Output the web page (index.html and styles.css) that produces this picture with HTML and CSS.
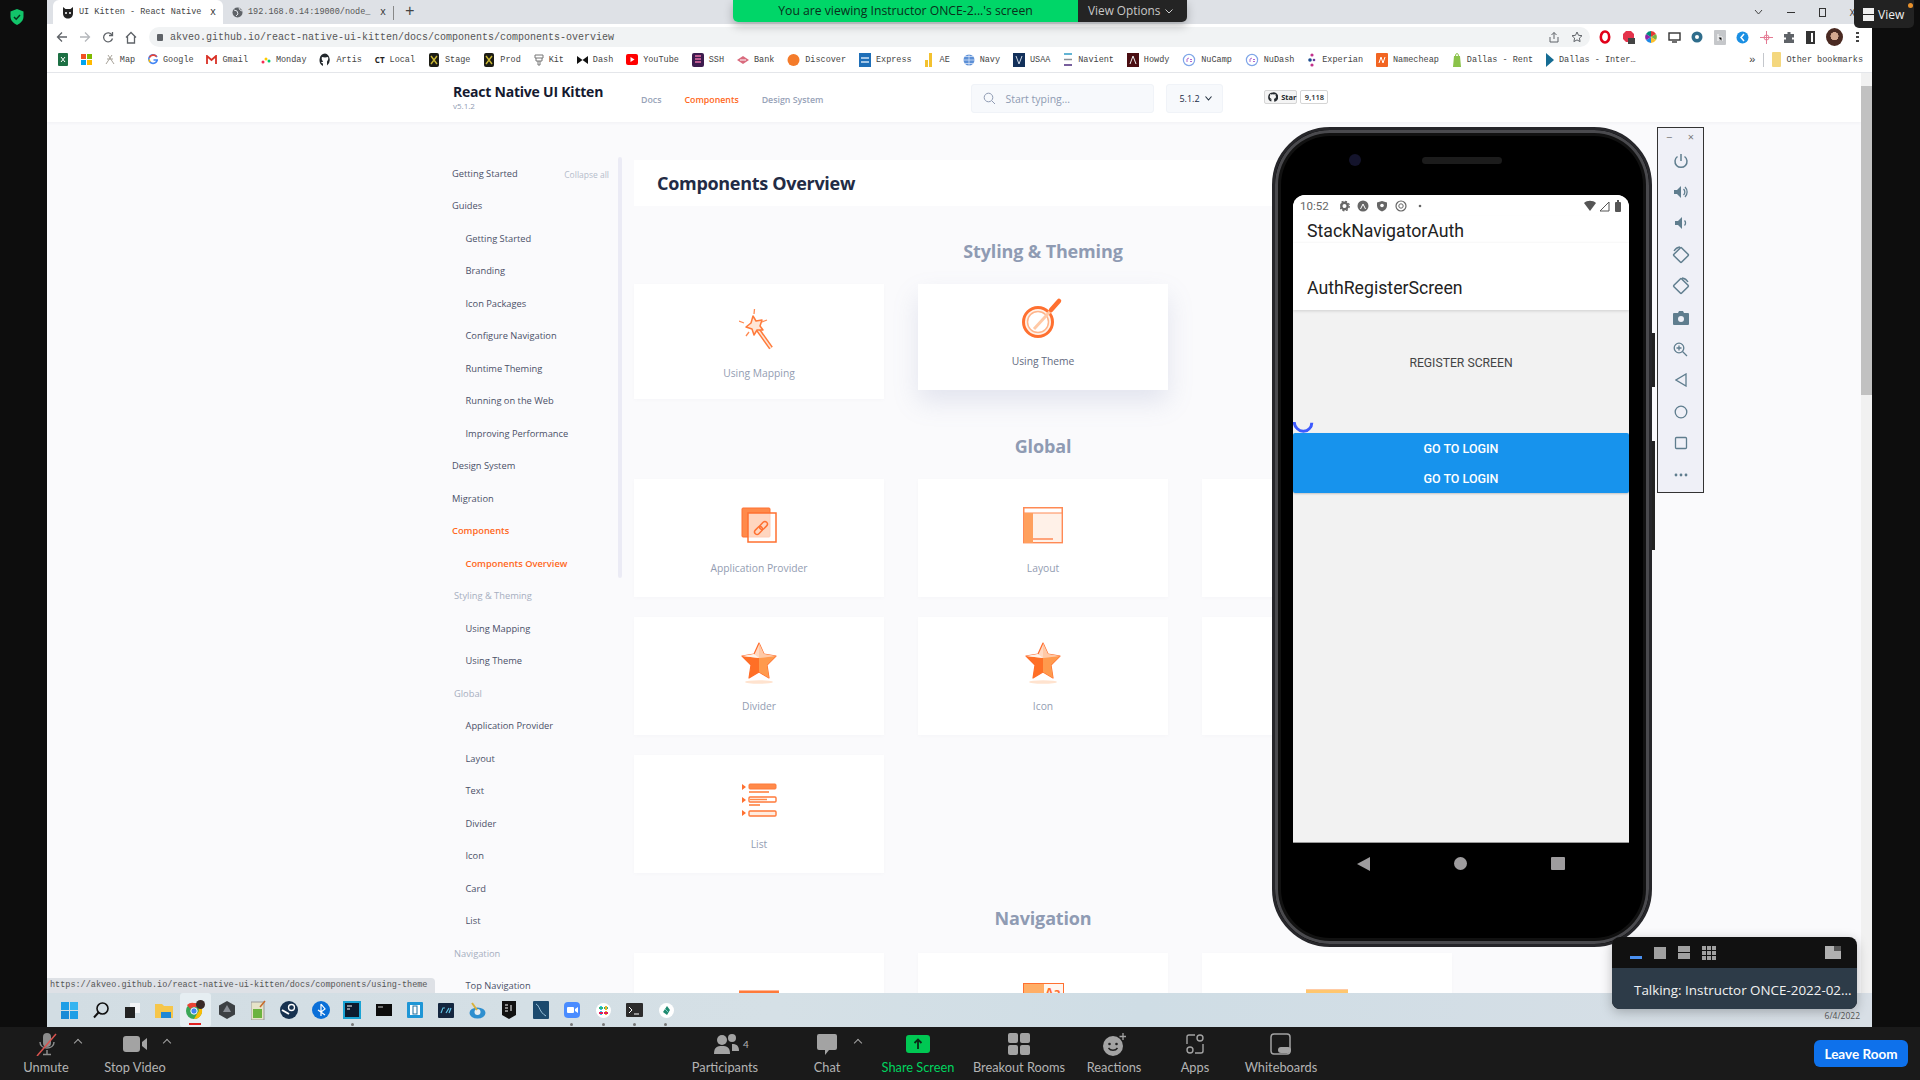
FILE: index.html
```html
<!DOCTYPE html>
<html lang="en">
<head>
    <meta charset="UTF-8">
    <title>UI Kitten - React Native</title>
    <link rel="stylesheet" href="styles.css">
</head>
<body>
<svg class="defs" width="0" height="0">
    <symbol id="star3d" viewBox="0 0 36 42">
        <path d="M18 1l5 11 12 2-9 9 2 13-10-6-10 6 2-13-9-9 12-2z" fill="#ffd9c2" stroke="#ff6b2b" stroke-width="1.2" stroke-linejoin="round"/>
        <path d="M18 1v15L35 14 23 12z" fill="#ffc9a6"/>
        <path d="M18 16l17-2-9 9 2 13-10-6z" fill="#ff9a4d"/>
        <path d="M18 16L1 14l9 9-2 13 10-6z" fill="#ff6f26"/>
        <path d="M18 16L1 14l12-2z" fill="#fff3ea"/>
        <ellipse cx="18" cy="40" rx="14" ry="1.8" fill="#ffe3cf"/>
    </symbol>
    <symbol id="fav-dark" viewBox="0 0 12 14">
        <rect x="1" y="0" width="10" height="14" rx="2" fill="#1c1c14"/>
        <path d="M3 3l6 8M9 3l-6 8" stroke="#c9b735" stroke-width="1.4"/>
    </symbol>
    <symbol id="fav-ring" viewBox="0 0 14 14">
        <circle cx="7" cy="7" r="5.6" fill="#fff" stroke="#7fa6e8" stroke-width="1.2"/>
        <path d="M5 9V6l2-1M8 6.500h2M8 8.500h2" stroke="#b26ad0" stroke-width="1" fill="none"/>
    </symbol>
</svg>

<div class="screen">
    <div class="desktop">
        <div class="rail rail-left">
            <svg class="shield" width="16" height="18" viewBox="0 0 16 18"><path d="M8 1l6.500 2.500v5c0 4-2.800 6.800-6.500 8.500C4.300 15.300 1.500 12.500 1.500 8.500v-5z" fill="#12c46a"/><path d="M5 9l2.200 2.200L11 7" fill="none" stroke="#06351d" stroke-width="1.500"/></svg>
        </div>

        <div class="window">
            <div class="tabstrip">
                <div class="tab tab-active">
                    <svg width="12" height="13" viewBox="0 0 12 13"><path d="M1 1l2.500 2h5L11 1v6.500c0 3-2.200 5-5 5s-5-2-5-5z" fill="#222"/><circle cx="4" cy="7" r="1" fill="#fff"/><circle cx="8" cy="7" r="1" fill="#fff"/></svg>
                    <span class="tab-title">UI Kitten - React Native</span>
                    <span class="tab-close">x</span>
                </div>
                <div class="tab">
                    <svg width="11" height="11" viewBox="0 0 11 11"><circle cx="5.500" cy="5.500" r="5" fill="#5f6368"/><path d="M2 3l3 1 1 3-2 2M7 1l1 2 2 1" stroke="#dee1e6" fill="none"/></svg>
                    <span class="tab-title">192.168.0.14:19000/node_</span>
                    <span class="tab-close">x</span>
                </div>
                <span class="tab-sep"></span>
                <span class="tab-new">+</span>
                <div class="win-controls">
                    <svg width="9" height="6" viewBox="0 0 9 6"><path d="M1 1l3.500 4L8 1" fill="none" stroke="#444"/></svg>
                    <span class="win-min"></span>
                    <span class="win-restore"></span>
                    <span class="win-close">X</span>
                </div>
            </div>

            <div class="toolbar">
                <div class="nav-btns">
                    <svg width="12" height="12" viewBox="0 0 12 12"><path d="M11 6H2M6 1.500L1.500 6 6 10.500" fill="none" stroke="#5f6368" stroke-width="1.300"/></svg>
                    <svg width="12" height="12" viewBox="0 0 12 12"><path d="M1 6h9M6 1.500L10.500 6 6 10.500" fill="none" stroke="#b4b7bb" stroke-width="1.300"/></svg>
                    <svg width="12" height="12" viewBox="0 0 12 12"><path d="M10 4A4.500 4.500 0 1 0 10.500 7.500M10.500 1v3.500H7" fill="none" stroke="#5f6368" stroke-width="1.300"/></svg>
                    <svg width="12" height="13" viewBox="0 0 12 13"><path d="M1 6.500L6 1.500l5 5M2.500 5.500V12h7V5.500" fill="none" stroke="#5f6368" stroke-width="1.300"/></svg>
                </div>
                <div class="omnibox">
                    <span class="lock"></span>
                    <span class="url">akveo.github.io/react-native-ui-kitten/docs/components/components-overview</span>
                    <svg class="omni-share" width="12" height="12" viewBox="0 0 12 12"><path d="M6 8V1.500M3.500 4L6 1.500 8.500 4M2 6v5h8V6" fill="none" stroke="#5f6368"/></svg>
                    <svg class="omni-star" width="12" height="12" viewBox="0 0 12 12"><path d="M6 1l1.500 3.300 3.500.4-2.600 2.400.7 3.500L6 8.900l-3.100 1.700.7-3.500L1 4.700l3.500-.4z" fill="none" stroke="#5f6368"/></svg>
                </div>
                <div class="extensions">
                    <svg width="12" height="14" viewBox="0 0 12 14"><ellipse cx="6" cy="7" rx="4.200" ry="5.500" fill="none" stroke="#e2001a" stroke-width="2.600"/></svg>
                    <svg width="13" height="14" viewBox="0 0 13 14"><path d="M4 1h5l3 3v5l-3 3H4L1 9V4z" fill="#e4334b"/><rect x="6" y="8" width="7" height="6" fill="#444"/></svg>
                    <svg width="12" height="12" viewBox="0 0 12 12"><path d="M6 6V0a6 6 0 0 1 5 3z" fill="#e53935"/><path d="M6 6l5-3a6 6 0 0 1 0 6z" fill="#7cb342"/><path d="M6 6l5 3a6 6 0 0 1-5 3z" fill="#fbc02d"/><path d="M6 6v6a6 6 0 0 1-5-3z" fill="#1e88e5"/><path d="M6 6L1 9a6 6 0 0 1 0-6z" fill="#8e24aa"/><path d="M6 6L1 3a6 6 0 0 1 5-3z" fill="#00897b"/></svg>
                    <svg width="13" height="11" viewBox="0 0 13 11"><rect x="1" y="1" width="11" height="7" fill="none" stroke="#333" stroke-width="1.400"/><path d="M4 10h5" stroke="#333" stroke-width="1.400"/></svg>
                    <svg width="12" height="12" viewBox="0 0 12 12"><circle cx="6" cy="6" r="5.500" fill="#2f6d8c"/><circle cx="6" cy="6" r="2" fill="#fff"/></svg>
                    <svg width="12" height="15" viewBox="0 0 12 15"><rect width="12" height="15" rx="1" fill="#c5c7ca"/><path d="M4 4v7M4 7h4v4" stroke="#fff"/></svg>
                    <svg width="13" height="13" viewBox="0 0 13 13"><circle cx="6.500" cy="6.500" r="6" fill="#1a8fe3"/><path d="M8 3L5 6.500 8 10" fill="none" stroke="#fff" stroke-width="1.500"/></svg>
                    <svg width="13" height="13" viewBox="0 0 13 13"><path d="M6.500 0v13M0 6.500h13" stroke="#e57a94"/><circle cx="6.500" cy="6.500" r="2.500" fill="none" stroke="#e57a94"/></svg>
                    <svg width="12" height="12" viewBox="0 0 12 12"><path d="M4.500 1h3v2H11v3.500H9v2h2V12H1V8.500h2v-2H1V3h3.500z" fill="#5f6368"/></svg>
                    <span class="ext-panel"></span>
                    <span class="ext-avatar"></span>
                    <span class="ext-menu"></span>
                </div>
            </div>

            <div class="bookmarks">
                <span class="bm"><svg width="10" height="13" viewBox="0 0 10 13"><rect width="10" height="13" rx="1" fill="#1d7044"/><path d="M3 4l4 5M7 4L3 9" stroke="#fff"/></svg></span>
                <span class="bm"><svg width="11" height="11" viewBox="0 0 11 11"><rect width="5" height="5" fill="#f25022"/><rect x="6" width="5" height="5" fill="#7fba00"/><rect y="6" width="5" height="5" fill="#00a4ef"/><rect x="6" y="6" width="5" height="5" fill="#ffb900"/></svg></span>
                <span class="bm"><svg width="10" height="11" viewBox="0 0 10 11"><path d="M1 10L7 1M9 10L3 1M2 5h6" stroke="#a8a39a"/></svg>Map</span>
                <span class="bm"><svg width="10" height="11" viewBox="0 0 10 11"><path d="M9 3.200A4.300 4.300 0 1 0 9.300 6H5.500" fill="none" stroke="#4285f4" stroke-width="1.600"/><path d="M1.500 3.500A4.300 4.300 0 0 1 8.500 2.500" fill="none" stroke="#ea4335" stroke-width="1.600"/><path d="M1.200 5.500a4.300 4.300 0 0 0 .8 2.500" fill="none" stroke="#fbbc05" stroke-width="1.600"/></svg>Google</span>
                <span class="bm"><svg width="11" height="10" viewBox="0 0 11 10"><path d="M1 9V1l4.500 4L10 1v8" fill="none" stroke="#d93025" stroke-width="1.800"/></svg>Gmail</span>
                <span class="bm"><svg width="10" height="9" viewBox="0 0 10 9"><circle cx="2" cy="7" r="1.500" fill="#f62b54"/><circle cx="5" cy="4" r="1.500" fill="#ffcb00"/><circle cx="8" cy="6" r="1.500" fill="#00ca72"/></svg>Monday</span>
                <span class="bm"><svg width="12" height="14" viewBox="0 0 12 14"><path d="M6 .5a5.600 6.500 0 0 0-2 12.500v-2.500c-1 0-1.500-1-2-1.500h2c0-1-2-2-1-5 1 0 2 .5 3 .5s2-.5 3-.5c1 3-1 4-1 5v3.500A5.600 6.500 0 0 0 6 .5z" fill="#24292e"/></svg>Artis</span>
                <span class="bm bm-ct"><b>CT</b>Local</span>
                <span class="bm"><svg width="12" height="14"><use href="#fav-dark"/></svg>Stage</span>
                <span class="bm"><svg width="12" height="14"><use href="#fav-dark"/></svg>Prod</span>
                <span class="bm"><svg width="10" height="12" viewBox="0 0 10 12"><path d="M1 1h8v3H1zM2 4v3h6V4M4 7v4h2V7" fill="none" stroke="#777"/></svg>Kit</span>
                <span class="bm"><svg width="11" height="8" viewBox="0 0 11 8"><path d="M0 0l5.500 4L11 0v8L5.500 4 0 8z" fill="#111"/></svg>Dash</span>
                <span class="bm"><svg width="12" height="11" viewBox="0 0 12 11"><rect width="12" height="11" rx="2" fill="#f00"/><path d="M4.500 3l4 2.500-4 2.500z" fill="#fff"/></svg>YouTube</span>
                <span class="bm"><svg width="12" height="14" viewBox="0 0 12 14"><rect width="12" height="14" rx="2" fill="#3d1c4e"/><path d="M3 3h6M3 6h6M3 9h6" stroke="#e86fa6" stroke-width="1.500"/></svg>SSH</span>
                <span class="bm"><svg width="12" height="8" viewBox="0 0 12 8"><path d="M0 4l6-4 6 4-6 4z" fill="#d96a7d"/><path d="M3 4h6" stroke="#fff"/></svg>Bank</span>
                <span class="bm"><svg width="13" height="16" viewBox="0 0 13 16"><circle cx="6.500" cy="8" r="6" fill="#f47b2a"/></svg>Discover</span>
                <span class="bm"><svg width="12" height="14" viewBox="0 0 12 14"><rect width="12" height="14" fill="#1f6fb8"/><path d="M2 5h8M2 9h8" stroke="#cfe3f5" stroke-width="1.500"/></svg>Express</span>
                <span class="bm"><svg width="10" height="15" viewBox="0 0 10 15"><rect x="0" y="8" width="3" height="7" fill="#f3c12f"/><rect x="4" y="1" width="3" height="14" fill="#f3c12f"/></svg>AE</span>
                <span class="bm"><svg width="12" height="12" viewBox="0 0 12 12"><circle cx="6" cy="6" r="5.500" fill="#5b8fd6"/><path d="M0 6h12M6 0v12M2 2.500h8M2 9.500h8" stroke="#e6eefa" stroke-width=".7"/></svg>Navy</span>
                <span class="bm"><svg width="12" height="14" viewBox="0 0 12 14"><rect width="12" height="14" fill="#12305a"/><path d="M3 3l3 8 3-8" fill="none" stroke="#cfd8e6"/></svg>USAA</span>
                <span class="bm"><svg width="10" height="13" viewBox="0 0 10 13"><path d="M1 1h8" stroke="#2e9bc6" stroke-width="1.500"/><path d="M1 6.500h8" stroke="#8a8f96" stroke-width="1.500"/><path d="M1 12h8" stroke="#4b2a7c" stroke-width="1.500"/></svg>Navient</span>
                <span class="bm"><svg width="12" height="14" viewBox="0 0 12 14"><rect width="12" height="14" fill="#4a0e12"/><path d="M3 11l3-8 3 8" fill="none" stroke="#eee"/></svg>Howdy</span>
                <span class="bm"><svg width="14" height="14"><use href="#fav-ring"/></svg>NuCamp</span>
                <span class="bm"><svg width="14" height="14"><use href="#fav-ring"/></svg>NuDash</span>
                <span class="bm"><svg width="10" height="14" viewBox="0 0 10 14"><circle cx="5" cy="2" r="1.600" fill="#c2308c"/><circle cx="3" cy="7" r="1.800" fill="#1d4f91"/><circle cx="7" cy="7" r="1.300" fill="#6a3a9c"/><circle cx="5" cy="12" r="1.600" fill="#c2308c"/></svg>Experian</span>
                <span class="bm"><svg width="12" height="14" viewBox="0 0 12 14"><rect width="12" height="14" rx="1" fill="#f26522"/><path d="M3 10l2-6 2 6 2-6" fill="none" stroke="#fff"/></svg>Namecheap</span>
                <span class="bm"><svg width="10" height="15" viewBox="0 0 10 15"><path d="M2 4h6l1 11H1z" fill="#8bc34a"/><path d="M3.500 4a1.500 2.500 0 0 1 3 0" fill="none" stroke="#8bc34a"/></svg>Dallas - Rent</span>
                <span class="bm"><svg width="8" height="14" viewBox="0 0 8 14"><path d="M0 0l8 7-8 7z" fill="#156c93"/></svg>Dallas - Inter…</span>
                <span class="bm-end">
                    <span class="bm-more">»</span>
                    <span class="bm-sep"></span>
                    <span class="bm"><svg width="9" height="15" viewBox="0 0 9 15"><rect width="9" height="15" rx="1" fill="#f4d77e"/></svg>Other bookmarks</span>
                </span>
            </div>

            <div class="page">
                <div class="page-main">
                    <header class="site-header">
                        <div class="brand">
                            <div class="brand-name">React Native UI Kitten</div>
                            <div class="brand-ver">v5.1.2</div>
                        </div>
                        <nav class="site-nav">
                            <a>Docs</a>
                            <a class="is-active">Components</a>
                            <a>Design System</a>
                        </nav>
                        <div class="search">
                            <svg width="13" height="13" viewBox="0 0 13 13"><circle cx="5.500" cy="5.500" r="4.300" fill="none" stroke="#8f9bb3"/><path d="M8.800 8.800l3.200 3.200" stroke="#8f9bb3"/></svg>
                            <span>Start typing...</span>
                        </div>
                        <div class="version">
                            <span>5.1.2</span>
                            <svg width="7" height="5" viewBox="0 0 7 5"><path d="M.500.500L3.500 4l3-3.500" fill="none" stroke="#222f3e" stroke-width="1.100"/></svg>
                        </div>
                        <div class="gh-star">
                            <svg width="10" height="10" viewBox="0 0 12 12"><path d="M6 .3A5.800 5.800 0 0 0 4.200 11.600v-2c-1 .2-1.400-.5-1.600-1 .7.200 1.300.8 1.700.8 0-.5.200-.8.400-1-1.500-.3-2.600-1-2.600-2.900 0-.6.200-1.100.6-1.500-.1-.4-.2-1 .1-1.700.6 0 1.200.4 1.500.6a5 5 0 0 1 3.400 0c.3-.2.900-.6 1.500-.6.300.7.200 1.300.1 1.700.4.400.6.900.6 1.500 0 1.900-1.100 2.600-2.600 2.900.3.300.4.700.4 1.200v2.400A5.800 5.800 0 0 0 6 .3z" fill="#24292e"/></svg>
                            <span>Star</span>
                        </div>
                        <div class="gh-count">9,118</div>
                    </header>

                    <div class="site-body">
                        <aside class="sidebar">
                            <div class="side-item side-top side-first">Getting Started <span class="collapse">Collapse all</span></div>
                            <div class="side-item side-top">Guides</div>
                            <div class="side-item">Getting Started</div>
                            <div class="side-item">Branding</div>
                            <div class="side-item">Icon Packages</div>
                            <div class="side-item">Configure Navigation</div>
                            <div class="side-item">Runtime Theming</div>
                            <div class="side-item">Running on the Web</div>
                            <div class="side-item">Improving Performance</div>
                            <div class="side-item side-top">Design System</div>
                            <div class="side-item side-top">Migration</div>
                            <div class="side-item side-top is-active">Components</div>
                            <div class="side-item is-active">Components Overview</div>
                            <div class="side-item side-label">Styling &amp; Theming</div>
                            <div class="side-item">Using Mapping</div>
                            <div class="side-item">Using Theme</div>
                            <div class="side-item side-label">Global</div>
                            <div class="side-item">Application Provider</div>
                            <div class="side-item">Layout</div>
                            <div class="side-item">Text</div>
                            <div class="side-item">Divider</div>
                            <div class="side-item">Icon</div>
                            <div class="side-item">Card</div>
                            <div class="side-item">List</div>
                            <div class="side-item side-label">Navigation</div>
                            <div class="side-item">Top Navigation</div>
                            <div class="side-scroll"></div>
                        </aside>

                        <main class="content">
                            <div class="title-card"><h1>Components Overview</h1></div>

                            <h2 class="section-title">Styling &amp; Theming</h2>
                            <div class="card-grid card-grid-short">
                                <div class="card">
                                    <svg class="card-icon" width="40" height="44" viewBox="-3 0 40 44">
                                        <path d="M14 19l15 21" stroke="#ff7a3a" stroke-width="4.500"/><path d="M14 19l15 21" stroke="#ffe4d2" stroke-width="1.500"/>
                                        <path d="M11 8l3 5 6-1-2 6 3 4-6 0-3 5-2-6-6-2 5-4z" fill="#ffe6d6" stroke="#ff7a3a" stroke-width="1.500" stroke-linejoin="round"/>
                                        <path d="M12.500 1L12 6M-3 13l5 2M25 12l-5 2M4 28l3-4" stroke="#ff8a52" stroke-width="1.300"/>
                                    </svg>
                                    <span class="card-label">Using Mapping</span>
                                </div>
                                <div class="card card-hover">
                                    <svg class="card-icon" width="46" height="44" viewBox="0 0 46 44">
                                        <circle cx="18" cy="26" r="14.500" fill="#fff3ea" stroke="#ff7030" stroke-width="3"/>
                                        <circle cx="18" cy="26" r="10.500" fill="#fff" stroke="#ffb48a" stroke-width="1.500"/>
                                        <path d="M14 33l22-24" stroke="#ffc9a6" stroke-width="3"/>
                                        <path d="M31 14l8-9" stroke="#ff7030" stroke-width="4.500" stroke-linecap="round"/>
                                    </svg>
                                    <span class="card-label">Using Theme</span>
                                </div>
                            </div>

                            <h2 class="section-title section-title-global">Global</h2>
                            <div class="card-grid">
                                <div class="card">
                                    <svg class="card-icon" width="36" height="44" viewBox="0 0 36 44">
                                        <rect x="1" y="5" width="28" height="29" rx="1" fill="#ff8a4a" stroke="#ff7030"/>
                                        <rect x="7" y="10" width="28" height="29" fill="#fff" fill-opacity=".65" stroke="#ff7030" stroke-width="1.500"/>
                                        <g transform="rotate(-45 20 25)" fill="none" stroke="#ff7030" stroke-width="1.500">
                                            <rect x="12" y="22.500" width="9" height="5" rx="2.500"/>
                                            <rect x="19" y="22.500" width="9" height="5" rx="2.500"/>
                                        </g>
                                    </svg>
                                    <span class="card-label">Application Provider</span>
                                </div>
                                <div class="card">
                                    <svg class="card-icon" width="40" height="44" viewBox="0 0 40 44">
                                        <rect x=".7" y="4.700" width="38.600" height="35" fill="#fff1e8" stroke="#ff8a55" stroke-width="1.400"/>
                                        <rect x="1" y="5" width="38" height="5" fill="#fff" stroke="#ff8a55"/>
                                        <rect x="1" y="10" width="9" height="30" fill="#ffa05e"/>
                                        <path d="M10 36h20" stroke="#ff7030" stroke-width="1.200"/>
                                    </svg>
                                    <span class="card-label">Layout</span>
                                </div>
                                <div class="card"></div>
                                <div class="card">
                                    <svg class="card-icon" width="36" height="42"><use href="#star3d"/></svg>
                                    <span class="card-label">Divider</span>
                                </div>
                                <div class="card">
                                    <svg class="card-icon" width="36" height="42"><use href="#star3d"/></svg>
                                    <span class="card-label">Icon</span>
                                </div>
                                <div class="card"></div>
                                <div class="card">
                                    <svg class="card-icon" width="36" height="44" viewBox="0 0 36 44">
                                        <path d="M1 5l4 3-4 3zM1 18l4 3-4 3zM1 31l4 3-4 3z" fill="#ff7030"/>
                                        <rect x="8" y="5" width="27" height="5" rx="1" fill="#ff8a4a" stroke="#ff7a3a"/><path d="M8 13h20" stroke="#ff9a66" stroke-width="2"/>
                                        <rect x="8" y="18" width="27" height="5" rx="1" fill="#fff" stroke="#ff7a3a" stroke-width="1.400"/><path d="M8 26h11" stroke="#ff9a66" stroke-width="2"/><path d="M9 20.500h17" stroke="#ff8a4a" stroke-width="1.500"/>
                                        <rect x="8" y="32" width="27" height="5" rx="1" fill="#ffece0" stroke="#ff7a3a" stroke-width="1.400"/>
                                    </svg>
                                    <span class="card-label">List</span>
                                </div>
                            </div>

                            <h2 class="section-title section-title-nav">Navigation</h2>
                            <div class="card-grid">
                                <div class="card">
                                    <svg class="card-icon" width="40" height="44" viewBox="0 0 40 44"><rect y="14" width="40" height="30" fill="#fff" stroke="#ff7030"/><rect y="14" width="40" height="8" rx="1" fill="#ff7a3a"/></svg>
                                </div>
                                <div class="card">
                                    <div class="nav-tile"><span class="nav-tile-fill"></span><span class="nav-tile-text">Aa</span></div>
                                </div>
                                <div class="card">
                                    <svg class="card-icon" width="42" height="44" viewBox="0 0 42 44"><rect y="13" width="42" height="31" fill="#fff3d9" stroke="#ff9a4d"/><rect y="13" width="42" height="6" fill="#ffc66e"/></svg>
                                </div>
                            </div>
                        </main>
                    </div>

                    <div class="status-bubble">https://akveo.github.io/react-native-ui-kitten/docs/components/using-theme</div>
                </div>
                <div class="page-scroll"><span class="page-thumb"></span></div>
            </div>

            <div class="taskbar">
                <div class="task-icons">
                    <span class="task"><svg width="17" height="17" viewBox="0 0 17 17"><rect width="8" height="8" fill="#1e9ee6"/><rect x="9" width="8" height="8" fill="#35b4f0"/><rect y="9" width="8" height="8" fill="#1a8ad6"/><rect x="9" y="9" width="8" height="8" fill="#1e9ee6"/></svg></span>
                    <span class="task"><svg width="16" height="17" viewBox="0 0 16 17"><circle cx="9.500" cy="6.500" r="5.500" fill="none" stroke="#111" stroke-width="1.600"/><path d="M5.500 10.500L1 15.500" stroke="#111" stroke-width="2"/></svg></span>
                    <span class="task"><svg width="15" height="15" viewBox="0 0 15 15"><rect x="5" width="10" height="10" fill="#f2f4f6"/><rect y="4" width="10" height="11" fill="#222"/></svg></span>
                    <span class="task"><svg width="18" height="15" viewBox="0 0 18 15"><path d="M0 1h7l2 2h9v12H0z" fill="#f6c64a"/><rect x="6" y="9" width="10" height="6" fill="#1f87d6"/></svg></span>
                    <span class="task task-chrome"><svg width="20" height="20" viewBox="0 0 20 20"><circle cx="9" cy="11" r="8" fill="#3aa757"/><path d="M9 3a8 8 0 0 1 7 4H9a4 4 0 0 0-3.500 2L2 5a8 8 0 0 1 7-2z" fill="#ea4335"/><path d="M16 7a8 8 0 0 1-7 12l3.500-6a4 4 0 0 0 0-6z" fill="#fbbc05"/><circle cx="9" cy="11" r="3.200" fill="#4285f4" stroke="#fff"/><circle cx="15.500" cy="4.500" r="4.500" fill="#3a2a28"/></svg></span>
                    <span class="task"><svg width="16" height="18" viewBox="0 0 16 18"><path d="M8 0l8 4.500v9L8 18l-8-4.500v-9z" fill="#3c4043"/><path d="M8 4l4 7H4z" fill="#8a8f96"/></svg></span>
                    <span class="task"><svg width="15" height="20" viewBox="0 0 15 20"><rect y="2" width="13" height="18" fill="#e6e3c8" stroke="#999"/><rect x="2" y="9" width="9" height="9" fill="#6cb33f"/><path d="M9 7l5-6" stroke="#c86a2a" stroke-width="1.500"/></svg></span>
                    <span class="task"><svg width="18" height="18" viewBox="0 0 18 18"><circle cx="9" cy="9" r="9" fill="#16314f"/><circle cx="11.500" cy="6.500" r="3" fill="none" stroke="#fff" stroke-width="1.300"/><path d="M2 9l7 4" stroke="#fff" stroke-width="2"/></svg></span>
                    <span class="task"><svg width="18" height="18" viewBox="0 0 18 18"><circle cx="9" cy="9" r="9" fill="#0a6fd8"/><path d="M9 3l4 5-4 3-3-2 7 5M9 3v12" fill="none" stroke="#fff" stroke-width="1.200"/></svg></span>
                    <span class="task task-open"><svg width="18" height="18" viewBox="0 0 18 18"><rect width="18" height="18" fill="#1aa3d4"/><rect x="2" y="2" width="14" height="14" fill="#0d1b2e"/><path d="M4 5h5M4 8h3" stroke="#fff"/></svg></span>
                    <span class="task"><svg width="16" height="12" viewBox="0 0 16 12"><rect width="16" height="12" fill="#0c0c0c"/><path d="M2 3h5" stroke="#ccc"/></svg></span>
                    <span class="task"><svg width="16" height="16" viewBox="0 0 16 16"><rect width="16" height="16" rx="1" fill="#1e96d6"/><rect x="3" y="3" width="10" height="10" fill="#fff"/><rect x="6" y="4" width="4" height="8" fill="none" stroke="#1e6e9e"/></svg></span>
                    <span class="task"><svg width="16" height="15" viewBox="0 0 16 15"><rect width="16" height="15" rx="1" fill="#14263f"/><path d="M3 10l2-5h2M8 10l3-5M11 10l2-5" stroke="#63c6ea" stroke-width="1.200"/></svg></span>
                    <span class="task"><svg width="17" height="17" viewBox="0 0 17 17"><ellipse cx="8.500" cy="11" rx="8" ry="5.500" fill="#2f8fcf"/><circle cx="8.500" cy="10" r="3" fill="#e8eef2"/><path d="M8 8L3 1" stroke="#d9b13b" stroke-width="2"/></svg></span>
                    <span class="task"><svg width="14" height="18" viewBox="0 0 14 18"><path d="M0 0h14v14l-7 4-7-4z" fill="#111"/><path d="M3 4h3M3 7h3M3 10h3M9 4v6" stroke="#fff"/></svg></span>
                    <span class="task"><svg width="16" height="18" viewBox="0 0 16 18"><rect width="16" height="18" rx="1" fill="#1c4a6e"/><path d="M3 3c4 2 3 8 10 12" fill="none" stroke="#9fc6de"/></svg></span>
                    <span class="task task-open"><svg width="16" height="16" viewBox="0 0 16 16"><rect width="16" height="16" rx="4" fill="#4a8cff"/><rect x="3" y="5" width="7" height="6" rx="1" fill="#fff"/><path d="M11 7l3-2v6l-3-2z" fill="#fff"/></svg></span>
                    <span class="task task-open"><svg width="15" height="15" viewBox="0 0 15 15"><circle cx="7.500" cy="7.500" r="7.500" fill="#fff"/><path d="M5 3v4M5 8v4" stroke="#36c5f0" stroke-width="2"/><path d="M3 5h4M8 5h4" stroke="#2eb67d" stroke-width="2"/><path d="M10 3v4M10 8v4" stroke="#ecb22e" stroke-width="2"/><path d="M3 10h4M8 10h4" stroke="#e01e5a" stroke-width="2"/></svg></span>
                    <span class="task task-open"><svg width="17" height="14" viewBox="0 0 17 14"><rect width="17" height="14" rx="1" fill="#2c2c2c"/><path d="M3 4l3 3-3 3M8 11h5" fill="none" stroke="#fff"/></svg></span>
                    <span class="task task-open"><svg width="15" height="15" viewBox="0 0 15 15"><circle cx="7.500" cy="7.500" r="7.500" fill="#fff"/><path d="M4 9l4-6 3 4-3 5z" fill="#1f8a70"/><path d="M6 6l3 3" stroke="#7ad0c0"/></svg></span>
                </div>
                <span class="task-date">6/4/2022</span>
            </div>
        </div>

        <div class="rail rail-right"></div>
    </div>

    <div class="zoom-bar">
        <div class="zoom-left">
            <div class="zoom-item">
                <svg width="24" height="24" viewBox="0 0 24 24"><rect x="9" y="1" width="8" height="14" rx="4" fill="#8c8c8c"/><path d="M6 10c0 8 14 8 14 0M13 18v4M9 22.500h8" fill="none" stroke="#8c8c8c" stroke-width="1.500"/><path d="M3 24L22 2" stroke="#d9534f" stroke-width="1.500"/></svg>
                <span>Unmute</span>
                <span class="zoom-caret"></span>
            </div>
            <div class="zoom-item">
                <svg width="24" height="24" viewBox="0 0 24 24"><rect y="4" width="17" height="16" rx="3" fill="#a3a3a3"/><path d="M19 10l5-4v12l-5-4z" fill="#a3a3a3"/></svg>
                <span>Stop Video</span>
                <span class="zoom-caret"></span>
            </div>
        </div>
        <div class="zoom-center">
            <div class="zoom-item">
                <div class="zoom-people">
                    <svg width="26" height="24" viewBox="0 0 26 24"><circle cx="8" cy="8" r="5" fill="#a3a3a3"/><path d="M0 22c0-7 3-8 8-8s8 1 8 8z" fill="#a3a3a3"/><circle cx="18" cy="6" r="4" fill="#a3a3a3"/><path d="M18 12c4 0 7 1 7 7h-7z" fill="#a3a3a3"/></svg>
                    <span>4</span>
                </div>
                <span>Participants</span>
            </div>
            <div class="zoom-item">
                <svg width="22" height="24" viewBox="0 0 22 24"><path d="M3 2h16a2 2 0 0 1 2 2v12a2 2 0 0 1-2 2h-6l-4 5v-5H3a2 2 0 0 1-2-2V4a2 2 0 0 1 2-2z" fill="#a3a3a3"/></svg>
                <span>Chat</span>
                <span class="zoom-caret zoom-caret-chat"></span>
            </div>
            <div class="zoom-item zoom-share">
                <svg width="24" height="24" viewBox="0 0 24 24"><rect y="3" width="24" height="18" rx="3" fill="#00c853"/><path d="M12 17V8M8.500 11L12 7.500l3.500 3.500" fill="none" stroke="#0a2a16" stroke-width="1.800"/></svg>
                <span>Share Screen</span>
            </div>
            <div class="zoom-item">
                <svg width="22" height="24" viewBox="0 0 22 24"><rect y="1" width="10" height="10" rx="2" fill="#a3a3a3"/><rect x="12" y="1" width="10" height="10" rx="2" fill="#a3a3a3"/><rect y="13" width="10" height="10" rx="2" fill="#a3a3a3"/><rect x="12" y="13" width="10" height="10" rx="2" fill="#a3a3a3"/></svg>
                <span>Breakout Rooms</span>
            </div>
            <div class="zoom-item">
                <svg width="24" height="24" viewBox="0 0 24 24"><circle cx="11" cy="14" r="10" fill="#a3a3a3"/><circle cx="7.500" cy="12" r="1.300" fill="#222"/><circle cx="14.500" cy="12" r="1.300" fill="#222"/><path d="M6.500 16c2 3 7 3 9 0" fill="none" stroke="#222" stroke-width="1.400"/><path d="M21 1v7M17.500 4.500h7" stroke="#a3a3a3" stroke-width="1.300"/></svg>
                <span>Reactions</span>
            </div>
            <div class="zoom-item">
                <svg width="20" height="24" viewBox="0 0 20 24"><path d="M10 3H4a2 2 0 0 0-2 2v7M10 21h6a2 2 0 0 0 2-2v-7" fill="none" stroke="#a3a3a3" stroke-width="1.400"/><circle cx="15" cy="6" r="3" fill="none" stroke="#a3a3a3" stroke-width="1.400"/><circle cx="5" cy="18" r="3" fill="none" stroke="#a3a3a3" stroke-width="1.400"/></svg>
                <span>Apps</span>
            </div>
            <div class="zoom-item">
                <svg width="22" height="24" viewBox="0 0 22 24"><rect x="1" y="2" width="19" height="20" rx="3" fill="none" stroke="#a3a3a3" stroke-width="1.500"/><rect x="8" y="15" width="13" height="6" rx="3" fill="#a3a3a3"/></svg>
                <span>Whiteboards</span>
            </div>
        </div>
        <button class="leave-btn">Leave Room</button>
    </div>

    <div class="share-banner">
        <span class="share-text">You are viewing Instructor ONCE-2...'s screen</span>
        <span class="share-opts">View Options <svg width="8" height="5" viewBox="0 0 8 5"><path d="M.500.500L4 4 7.500.500" fill="none" stroke="#ccc"/></svg></span>
    </div>

    <div class="view-btn">
        <svg width="11" height="13" viewBox="0 0 11 13"><rect width="11" height="6" fill="#eee"/><rect y="7" width="11" height="6" fill="#eee"/></svg>
        <span>View</span>
        <span class="view-dot"></span>
    </div>

    <div class="phone">
        <span class="phone-key phone-key-a"></span>
        <span class="phone-key phone-key-b"></span>
        <div class="phone-top">
            <span class="phone-cam"></span>
            <span class="phone-speaker"></span>
        </div>
        <div class="phone-screen">
            <div class="status-row">
                <span class="status-time">10:52</span>
                <svg width="82" height="12" viewBox="0 0 82 12">
                    <circle cx="4.500" cy="6" r="3.200" fill="none" stroke="#666" stroke-width="2.400"/><circle cx="4.500" cy="6" r="4.800" fill="none" stroke="#666" stroke-width="1.200" stroke-dasharray="2 1.770"/>
                    <circle cx="23" cy="6" r="5.500" fill="#666"/><path d="M20.500 9l2.500-5 2.500 5" fill="none" stroke="#fff"/>
                    <path d="M42 1l5 1.500v3c0 3-2 5-5 6-3-1-5-3-5-6v-3z" fill="#666"/><circle cx="42" cy="5.500" r="1.800" fill="#fff"/>
                    <circle cx="61" cy="6" r="5" fill="none" stroke="#666" stroke-width="1.200"/><circle cx="61" cy="6" r="2.200" fill="none" stroke="#666"/>
                    <circle cx="80" cy="6" r="1.300" fill="#666"/>
                </svg>
                <svg class="status-right" width="44" height="12" viewBox="0 0 44 12">
                    <path d="M0 3c3-3 9-3 12 0L6 11z" fill="#555"/>
                    <path d="M16 11l9-9v9z" fill="none" stroke="#555"/>
                    <rect x="31" y="2" width="6" height="10" rx="1" fill="#555"/><rect x="33" y="0" width="2" height="2" fill="#555"/>
                </svg>
            </div>
            <div class="app-head">StackNavigatorAuth</div>
            <div class="app-sub">AuthRegisterScreen</div>
            <div class="app-body">
                <span class="reg-text">REGISTER SCREEN</span>
                <span class="spinner"></span>
            </div>
            <div class="app-buttons">
                <div class="app-btn">GO TO LOGIN</div>
                <div class="app-btn">GO TO LOGIN</div>
            </div>
        </div>
        <div class="phone-nav">
            <svg width="13" height="14" viewBox="0 0 13 14"><path d="M0 7L13 0v14z" fill="#9e9c9e"/></svg>
            <svg width="13" height="13" viewBox="0 0 13 13"><circle cx="6.500" cy="6.500" r="6.500" fill="#9e9c9e"/></svg>
            <svg width="14" height="13" viewBox="0 0 14 13"><rect width="14" height="13" rx="1" fill="#9e9c9e"/></svg>
        </div>
    </div>

    <div class="emu-bar">
        <div class="emu-top"><span>−</span><span>×</span></div>
        <svg width="16" height="16" viewBox="0 0 16 16"><path d="M8 1v7M4.500 3.500a6 6 0 1 0 7 0" fill="none" stroke="#5f7d8e" stroke-width="1.500"/></svg>
        <svg width="16" height="16" viewBox="0 0 16 16"><path d="M1 6h3l4-4v12l-4-4H1z" fill="#5f7d8e"/><path d="M10.500 5a4 4 0 0 1 0 6M12 3a7 7 0 0 1 0 10" fill="none" stroke="#5f7d8e" stroke-width="1.300"/></svg>
        <svg width="16" height="16" viewBox="0 0 16 16"><path d="M2 6h3l4-4v12l-4-4H2z" fill="#5f7d8e"/><path d="M11.500 5.500a3.500 3.500 0 0 1 0 5" fill="none" stroke="#5f7d8e" stroke-width="1.300"/></svg>
        <svg width="18" height="18" viewBox="0 0 18 18"><rect x="3.500" y="3.500" width="11" height="11" rx="1" transform="rotate(45 9 9)" fill="none" stroke="#5f7d8e" stroke-width="1.500"/><path d="M2 5a8 8 0 0 1 6-4" fill="none" stroke="#5f7d8e" stroke-width="1.300"/></svg>
        <svg width="18" height="18" viewBox="0 0 18 18"><rect x="3.500" y="3.500" width="11" height="11" rx="1" transform="rotate(45 9 9)" fill="none" stroke="#5f7d8e" stroke-width="1.500"/><path d="M16 5a8 8 0 0 0-6-4" fill="none" stroke="#5f7d8e" stroke-width="1.300"/></svg>
        <svg width="16" height="14" viewBox="0 0 16 14"><path d="M1 2h4l1-2h4l1 2h4a1 1 0 0 1 1 1v10a1 1 0 0 1-1 1H1a1 1 0 0 1-1-1V3a1 1 0 0 1 1-1z" fill="#5f7d8e"/><circle cx="8" cy="8" r="3" fill="#eef0f7"/></svg>
        <svg width="15" height="15" viewBox="0 0 15 15"><circle cx="6" cy="6" r="4.800" fill="none" stroke="#5f7d8e" stroke-width="1.300"/><path d="M9.500 9.500L14 14M6 3.500v5M3.500 6h5" stroke="#5f7d8e" stroke-width="1.300"/></svg>
        <svg width="12" height="14" viewBox="0 0 12 14"><path d="M11 1v12L1 7z" fill="none" stroke="#5f7d8e" stroke-width="1.300"/></svg>
        <svg width="14" height="14" viewBox="0 0 14 14"><circle cx="7" cy="7" r="5.800" fill="none" stroke="#5f7d8e" stroke-width="1.300"/></svg>
        <svg width="14" height="14" viewBox="0 0 14 14"><rect x="1.500" y="1.500" width="11" height="11" rx="1" fill="none" stroke="#5f7d8e" stroke-width="1.300"/></svg>
        <svg width="14" height="4" viewBox="0 0 14 4"><circle cx="2" cy="2" r="1.400" fill="#5f7d8e"/><circle cx="7" cy="2" r="1.400" fill="#5f7d8e"/><circle cx="12" cy="2" r="1.400" fill="#5f7d8e"/></svg>
    </div>

    <div class="mini-panel">
        <div class="mini-tools">
            <span class="mini-line"></span>
            <span class="mini-square"></span>
            <span class="mini-split"><i></i><i></i></span>
            <span class="mini-grid"><i></i><i></i><i></i><i></i><i></i><i></i><i></i><i></i><i></i></span>
            <span class="mini-corner"></span>
        </div>
        <div class="mini-talk">Talking: Instructor ONCE-2022-02...</div>
    </div>
</div>
</body>
</html>
```

FILE: styles.css
```css
* {
    box-sizing: border-box;
}
html, body {
    margin: 0;
    padding: 0;
    background: #0d0d0d;
}
body {
    font-family: "Open Sans", "Liberation Sans", sans-serif;
}
.defs {
    position: absolute;
}
.screen {
    position: relative;
    width: 1920px;
    height: 1080px;
    overflow: hidden;
    display: flex;
    flex-direction: column;
}
.desktop {
    display: flex;
    height: 1027px;
}
.rail {
    background: #0d0d0d;
}
.rail-left {
    width: 47px;
    padding: 8px 0 0 9px;
}
.shield {
    display: block;
}
.rail-right {
    width: 48px;
}
.window {
    flex: 1;
    min-width: 0;
    display: flex;
    flex-direction: column;
    background: #fff;
}

/* chrome */
.tabstrip {
    height: 24px;
    display: flex;
    align-items: stretch;
    background: #dee1e6;
    padding-left: 6px;
    font: 8.5px "Liberation Mono", monospace;
    color: #555;
}
.tab {
    width: 170px;
    display: flex;
    align-items: center;
    padding: 0 7px 0 9px;
    gap: 5px;
}
.tab-active {
    background: #fff;
    border-radius: 6px 6px 0 0;
    color: #444;
}
.tab-title {
    flex: 1;
    overflow: hidden;
    white-space: nowrap;
}
.tab-close {
    font-size: 10px;
    color: #333;
}
.tab-sep {
    width: 1px;
    height: 14px;
    margin: 6px 0 0 0;
    background: #888;
}
.tab-new {
    margin-left: 11px;
    font-size: 16px;
    line-height: 24px;
    color: #444;
}
.win-controls {
    margin-left: auto;
    display: flex;
    align-items: center;
    gap: 24px;
    padding-right: 17px;
}
.win-min {
    width: 8px;
    height: 1px;
    background: #333;
}
.win-restore {
    width: 7px;
    height: 9px;
    border: 1px solid #333;
}
.win-close {
    font: 9px "Open Sans", sans-serif;
    color: #333;
}
.toolbar {
    height: 23px;
    display: flex;
    align-items: center;
    padding: 3px 10px 0 9px;
}
.nav-btns {
    display: flex;
    gap: 11px;
    align-items: center;
}
.omnibox {
    width: 1441px;
    height: 20px;
    flex: none;
    margin-left: 12px;
    background: #f1f3f4;
    border-radius: 10px;
    display: flex;
    align-items: center;
    padding: 0 0 0 8px;
    font: 10px "Liberation Mono", monospace;
    color: #555;
}
.lock {
    width: 6px;
    height: 7px;
    background: #5f6368;
    border-radius: 1px;
}
.url {
    margin-left: 7px;
}
.omni-share {
    margin-left: auto;
}
.omni-star {
    margin: 0 7px 0 11px;
}
.extensions {
    display: flex;
    align-items: center;
    gap: 10.500px;
    margin-left: 9px;
}
.ext-panel {
    width: 9px;
    height: 13px;
    border: 2px solid #333;
    border-left-width: 5px;
}
.ext-avatar {
    width: 17px;
    height: 18px;
    margin-left: 1px;
    border-radius: 50%;
    background: radial-gradient(circle at 50% 45%, #d6a88f 0 30%, #4a2a22 32%);
}
.ext-menu {
    width: 3px;
    height: 12px;
    margin-left: 2px;
    background: radial-gradient(circle, #444 1.300px, transparent 1.500px) 0 0 / 3px 4px;
}
.bookmarks {
    height: 26px;
    display: flex;
    align-items: center;
    gap: 12.900px;
    padding: 0 9px 0 11px;
    border-bottom: 1px solid #e4e6ea;
    font: 8.500px "Liberation Mono", monospace;
    color: #444;
}
.bm {
    display: flex;
    align-items: center;
    gap: 5px;
    white-space: nowrap;
}
.bm-ct b {
    font: bold 8px "Open Sans", sans-serif;
    color: #222;
}
.bm-end {
    margin-left: auto;
    display: flex;
    align-items: center;
    gap: 8px;
}
.bm-more {
    font-size: 11px;
}
.bm-sep {
    width: 1px;
    height: 14px;
    background: #c4c7cc;
}

/* page */
.page {
    position: relative;
    flex: 1;
    min-height: 0;
    display: flex;
    background: #fafafc;
}
.page-main {
    flex: 1;
    min-width: 0;
    display: flex;
    flex-direction: column;
    overflow: hidden;
}
.page-scroll {
    width: 11px;
    background: #f1f1f1;
    padding-top: 13px;
}
.page-thumb {
    display: block;
    height: 309px;
    background: #c1c1c1;
}
.site-header {
    height: 49px;
    flex: none;
    display: flex;
    background: #fff;
    padding-left: 406px;
    box-shadow: 0 1px 3px rgba(80, 90, 120, 0.06);
    position: relative;
    z-index: 1;
}
.brand {
    width: 188px;
    padding-top: 10px;
}
.brand-name {
    font-size: 14px;
    line-height: 18px;
    font-weight: 700;
    color: #151a30;
    letter-spacing: -0.22px;
}
.brand-ver {
    font-size: 8px;
    line-height: 10px;
    color: #8f9bb3;
}
.site-nav {
    display: flex;
    gap: 23px;
    align-items: center;
    height: 54px;
    font-size: 8.800px;
    font-weight: 600;
    color: #98a3b8;
}
.site-nav .is-active {
    color: #ff6721;
}
.search {
    width: 183px;
    height: 29px;
    margin: 11px 0 0 148px;
    padding-left: 11px;
    display: flex;
    align-items: center;
    gap: 9px;
    background: #f7f9fc;
    border: 1px solid #f0f3f8;
    border-radius: 3px;
    font-size: 10.500px;
    color: #8f9bb3;
}
.version {
    width: 57px;
    height: 29px;
    margin: 11px 0 0 12px;
    padding: 0 10px 0 12px;
    display: flex;
    align-items: center;
    justify-content: space-between;
    background: #f7f9fc;
    border: 1px solid #f0f3f8;
    border-radius: 3px;
    font-size: 9px;
    color: #222b45;
}
.gh-star, .gh-count {
    height: 14px;
    margin-top: 17px;
    display: flex;
    align-items: center;
    border: 1px solid #d5d5d5;
    border-radius: 2px;
    font-size: 7.500px;
    font-weight: 700;
    color: #24292e;
}
.gh-star {
    width: 33px;
    margin-left: 41px;
    gap: 3px;
    padding-left: 3px;
    background: #f4f4f4;
}
.gh-count {
    width: 28px;
    margin-left: 3px;
    justify-content: center;
    background: #fff;
    font-weight: 600;
}
.site-body {
    flex: 1;
    min-height: 0;
    display: flex;
    padding-left: 405px;
}
.sidebar {
    position: relative;
    width: 182px;
    padding-top: 35.700px;
    font-size: 9.300px;
    color: #4a5068;
}
.side-item {
    height: 32.500px;
    line-height: 32.500px;
    padding-left: 13.500px;
    white-space: nowrap;
}
.side-top {
    padding-left: 0;
}
.side-label {
    padding-left: 2px;
    color: #a6aec0;
}
.side-item.is-active {
    color: #ff6721;
    font-weight: 600;
}
.side-first {
    display: flex;
    justify-content: space-between;
    padding-right: 25px;
}
.collapse {
    font-size: 8.500px;
    color: #b5bccb;
    padding-top: 1px;
}
.side-scroll {
    position: absolute;
    left: 166px;
    top: 35px;
    width: 4px;
    height: 421px;
    background: #ebebf5;
    border-radius: 2px;
}
.content {
    width: 818px;
    padding-top: 38px;
}
.title-card {
    height: 46px;
    background: #fff;
    padding-left: 23px;
    display: flex;
    align-items: center;
}
.title-card h1 {
    margin: 0;
    font-size: 18px;
    font-weight: 700;
    color: #222b45;
    letter-spacing: -0.3px;
}
.section-title {
    margin: 33px 0 21px;
    height: 24px;
    line-height: 24px;
    font-size: 18px;
    font-weight: 700;
    text-align: center;
    color: #8f9bb3;
    letter-spacing: -0.15px;
}
.section-title-global {
    margin-top: 35px;
}
.section-title-nav {
    margin-bottom: 23px;
}
.card-grid {
    display: grid;
    grid-template-columns: repeat(3, 250px);
    grid-auto-rows: 118px;
    justify-content: space-between;
    row-gap: 20px;
}
.card-grid-short {
    grid-auto-rows: 115px;
}
.card {
    background: #fff;
    display: flex;
    flex-direction: column;
    align-items: center;
    padding-top: 24px;
    box-shadow: 0 1px 3px rgba(120, 130, 160, 0.03);
}
.card-hover {
    height: 106px;
    padding-top: 12px;
    box-shadow: 0 12px 24px rgba(120, 135, 180, 0.18);
}
.card-hover .card-label {
    color: #636b80;
}
.card-icon {
    display: block;
    height: 44px;
    margin-bottom: 14px;
}
.card-label {
    font-size: 10.300px;
    line-height: 14px;
    font-weight: 500;
    color: #939db2;
}
.nav-tile {
    display: flex;
    width: 41px;
    height: 30px;
    margin-top: 6px;
    border: 1px solid #ff7030;
}
.nav-tile-fill {
    width: 20px;
    background: #ffae66;
}
.nav-tile-text {
    flex: 1;
    text-align: center;
    font-size: 12px;
    font-weight: 700;
    color: #ff7030;
    background: #fff6ef;
}
.status-bubble {
    position: absolute;
    left: 0;
    bottom: 0;
    width: 388px;
    height: 15px;
    padding: 0 3px;
    background: #dee1e6;
    border-radius: 0 4px 0 0;
    font: 8.500px/15px "Liberation Mono", monospace;
    color: #555;
    white-space: nowrap;
    overflow: hidden;
}
.taskbar {
    height: 34px;
    flex: none;
    display: flex;
    align-items: center;
    background: linear-gradient(90deg, #d2dde3, #d5e0e6 40%, #cfdde5 60%, #d8dfe6);
}
.task-icons {
    display: flex;
    padding-left: 7px;
}
.task {
    position: relative;
    width: 31.400px;
    height: 34px;
    display: flex;
    align-items: center;
    justify-content: center;
}
.task-open::after {
    content: "";
    position: absolute;
    bottom: 1px;
    left: 14px;
    width: 3px;
    height: 3px;
    border-radius: 50%;
    background: #777;
}
.task-chrome {
    background: #e6eef2;
    border-radius: 3px;
}
.task-chrome::after {
    content: "";
    position: absolute;
    bottom: 2px;
    left: 9px;
    width: 12px;
    height: 2px;
    background: #e02020;
}
.task-date {
    margin-left: auto;
    padding: 11px 12px 0 0;
    font-size: 8.500px;
    color: #555;
}

/* zoom bar */
.zoom-bar {
    flex: 1;
    display: flex;
    align-items: center;
    background: #1a1a1a;
}
.zoom-left {
    display: grid;
    grid-template-columns: 70px 70px;
    column-gap: 19px;
    margin-left: 11px;
}
.zoom-center {
    display: grid;
    grid-template-columns: 90px 114px 68px 134px 56px 106px 66px;
    margin-left: 510px;
}
.zoom-item {
    position: relative;
    display: flex;
    flex-direction: column;
    align-items: center;
    gap: 3px;
    font: 12.800px/16px Lato, "Open Sans", sans-serif;
    color: #b4b4b4;
    white-space: nowrap;
}
.zoom-people {
    display: flex;
    align-items: center;
    gap: 3px;
    margin-left: 13px;
    font-size: 10px;
    line-height: 24px;
}
.zoom-caret {
    position: absolute;
    right: 0;
    top: 8px;
    width: 6px;
    height: 6px;
    border-left: 1px solid #a3a3a3;
    border-top: 1px solid #a3a3a3;
    transform: rotate(45deg);
}
.zoom-caret-chat {
    right: 23px;
}
.zoom-share {
    color: #00d45f;
}
.leave-btn {
    margin-left: auto;
    margin-right: 12px;
    width: 94px;
    height: 27px;
    padding: 0;
    border: none;
    border-radius: 6px;
    background: #0e71eb;
    color: #fff;
    font: 700 13.500px Lato, sans-serif;
}

/* overlays */
.share-banner {
    position: absolute;
    left: 733px;
    top: 0;
    width: 454px;
    height: 22px;
    display: flex;
    border-radius: 0 0 5px 5px;
    overflow: hidden;
    box-shadow: 0 4px 10px rgba(0, 0, 0, 0.25);
    font-size: 12px;
    line-height: 21px;
}
.share-text {
    width: 345px;
    text-align: center;
    background: #00d668;
    color: #0a2f1b;
    font-size: 12.200px;
}
.share-opts {
    flex: 1;
    padding-left: 10px;
    background: #242424;
    color: #c8c8c8;
    white-space: nowrap;
    font-size: 11.800px;
}
.share-opts svg {
    margin-left: 2px;
    vertical-align: 1px;
}
.view-btn {
    position: absolute;
    left: 1854px;
    top: 0;
    width: 60px;
    height: 28px;
    display: flex;
    align-items: center;
    gap: 4px;
    padding-left: 9px;
    background: #222;
    border-radius: 0 0 5px 5px;
    font-size: 12px;
    color: #f0f0f0;
}
.view-dot {
    position: absolute;
    left: 54px;
    top: 3px;
    width: 5px;
    height: 5px;
    border-radius: 50%;
    background: #e8912c;
}
.phone {
    position: absolute;
    left: 1272px;
    top: 127px;
    width: 380px;
    height: 820px;
    display: flex;
    flex-direction: column;
    align-items: flex-start;
    padding-left: 18px;
    background: #000;
    border: 3px solid #26262a;
    border-radius: 58px;
    box-shadow: inset 0 0 0 3px #4a4a4e, inset 0 0 0 6px #111;
}
.phone-key {
    position: absolute;
    left: 377px;
    width: 3px;
    background: #222;
}
.phone-key-a {
    top: 203px;
    height: 54px;
}
.phone-key-b {
    top: 311px;
    height: 109px;
}
.phone-top {
    position: relative;
    height: 65px;
    width: 100%;
    flex: none;
}
.phone-cam {
    position: absolute;
    left: 56px;
    top: 24px;
    width: 12px;
    height: 12px;
    border-radius: 50%;
    background: #14142c;
}
.phone-speaker {
    position: absolute;
    left: 129px;
    top: 27px;
    width: 80px;
    height: 7px;
    border-radius: 4px;
    background: #1c1c1c;
}
.phone-screen {
    width: 336px;
    height: 648px;
    flex: none;
    display: flex;
    flex-direction: column;
    background: #f2f2f2;
    border-radius: 12px 12px 0 0;
    border-bottom: 1px solid #999;
    overflow: hidden;
    font-family: Roboto, sans-serif;
}
.status-row {
    height: 21px;
    flex: none;
    display: flex;
    align-items: center;
    padding: 0 1px 0 7px;
    background: #fff;
    color: #666;
}
.status-time {
    width: 40px;
    font-size: 11.500px;
}
.status-right {
    margin-left: auto;
}
.app-head {
    height: 27px;
    flex: none;
    padding-left: 14px;
    background: #fff;
    box-shadow: 0 1px 2px rgba(0, 0, 0, 0.08);
    font-size: 17.700px;
    line-height: 30px;
    color: #222;
    position: relative;
}
.app-sub {
    height: 67px;
    flex: none;
    padding: 31px 0 0 14px;
    background: #fff;
    box-shadow: 0 1px 3px rgba(0, 0, 0, 0.15);
    font-size: 17.700px;
    line-height: 28px;
    color: #222;
    position: relative;
}
.app-body {
    position: relative;
    height: 123px;
    flex: none;
    padding-top: 45px;
    text-align: center;
    font-size: 12.200px;
    line-height: 16px;
    color: #444;
}
.spinner {
    position: absolute;
    left: 0;
    top: 102px;
    width: 20px;
    height: 21px;
    border-radius: 50%;
    border: 3px solid transparent;
    border-bottom-color: #3d5afe;
    border-left-color: #3d5afe;
    transform: rotate(-45deg);
}
.app-buttons {
    height: 60px;
    flex: none;
    background: #1793ed;
    border-radius: 2px;
    box-shadow: 0 1px 2px rgba(0, 0, 0, 0.2);
}
.app-btn {
    height: 30px;
    line-height: 31px;
    text-align: center;
    font-size: 12.500px;
    font-weight: 500;
    color: #fff;
}
.phone-nav {
    width: 336px;
    display: flex;
    justify-content: space-between;
    padding: 14px 64px 0 64px;
}
.emu-bar {
    position: absolute;
    left: 1657px;
    top: 127px;
    width: 47px;
    height: 366px;
    display: grid;
    grid-template-rows: 17px repeat(11, 31.400px);
    justify-items: center;
    align-items: center;
    background: #eff0f7;
    border: 1px solid #333;
}
.emu-top {
    justify-self: stretch;
    height: 17px;
    display: flex;
    justify-content: space-between;
    padding: 1px 9px 0 8px;
    font-size: 11px;
    line-height: 16px;
    color: #777;
}
.mini-panel {
    position: absolute;
    left: 1612px;
    top: 937px;
    width: 245px;
    height: 72px;
    border-radius: 8px;
    background: #111;
    overflow: hidden;
    box-shadow: 0 3px 12px rgba(0, 0, 0, 0.25);
}
.mini-tools {
    height: 31px;
    display: flex;
    align-items: center;
    gap: 12px;
    padding: 0 16px 0 18px;
}
.mini-line {
    width: 12px;
    height: 3px;
    margin-top: 9px;
    background: #4a90f0;
}
.mini-square {
    width: 12px;
    height: 12px;
    background: #a0a0a0;
}
.mini-split {
    display: grid;
    gap: 1px;
    width: 12px;
}
.mini-split i {
    height: 6px;
    background: #a0a0a0;
}
.mini-grid {
    display: grid;
    grid-template-columns: repeat(3, 4px);
    gap: 1px;
}
.mini-grid i {
    height: 4px;
    background: #a0a0a0;
}
.mini-corner {
    margin-left: auto;
    width: 16px;
    height: 13px;
    background: linear-gradient(#555, #555) right top / 7px 5px no-repeat #b0b0b0;
}
.mini-talk {
    height: 41px;
    padding-left: 22px;
    line-height: 44px;
    font-size: 13.400px;
    white-space: nowrap;
    background: #2d3b48;
    color: #f2f2f2;
}
```
